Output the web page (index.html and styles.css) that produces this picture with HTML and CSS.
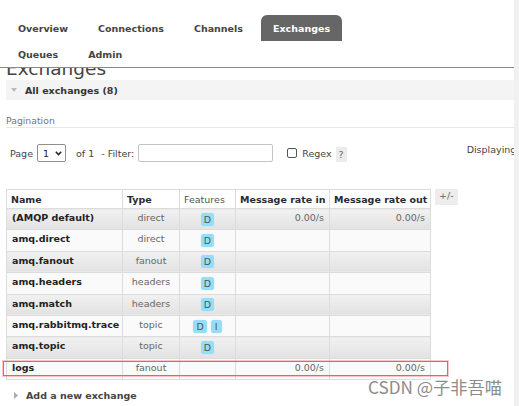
FILE: index.html
```html
<!DOCTYPE html>
<html>
<head>
<meta charset="utf-8">
<link rel="stylesheet" href="styles.css">
</head>
<body>
<div class="viewport">
  <div class="page">
    <nav class="tabs">
      <ul>
        <li><a>Overview</a></li>
        <li><a>Connections</a></li>
        <li><a>Channels</a></li>
        <li><a class="active">Exchanges</a></li>
        <li><a>Queues</a></li>
        <li><a>Admin</a></li>
      </ul>
    </nav>
    <div class="title-clip"><h1>Exchanges</h1></div>
    <div class="content">
      <div class="section-head">
        <svg class="tri-down" width="6" height="4" viewBox="0 0 6 4"><polygon points="0,0 6,0 3,4" fill="#bbb"/></svg>
        <span>All exchanges (8)</span>
      </div>
      <div class="pag-label">Pagination</div>
      <div class="filter-row">
        <span>Page</span>
        <div class="select"><span>1</span>
          <svg width="7" height="5" viewBox="0 0 7 5"><polyline points="0.8,0.8 3.5,3.6 6.2,0.8" fill="none" stroke="#222" stroke-width="1.5"/></svg>
        </div>
        <span class="of">of 1</span>
        <span class="filter">- Filter:</span>
        <div class="text-input"></div>
        <div class="checkbox"></div>
        <span class="regex">Regex</span>
        <span class="help">?</span>
        <span class="displaying">Displaying 8 items</span>
      </div>
      <div class="table-row">
        <div class="table-wrap">
          <table class="list">
            <colgroup>
              <col class="c-name"><col class="c-type"><col class="c-feat"><col class="c-in"><col class="c-out">
            </colgroup>
            <thead>
              <tr><th>Name</th><th>Type</th><th class="feat-h">Features</th><th>Message rate in</th><th>Message rate out</th></tr>
            </thead>
            <tbody>
              <tr class="alt1"><td class="name">(AMQP default)</td><td class="type">direct</td><td class="feat"><abbr>D</abbr></td><td class="rate">0.00/s</td><td class="rate">0.00/s</td></tr>
              <tr class="alt2"><td class="name">amq.direct</td><td class="type">direct</td><td class="feat"><abbr>D</abbr></td><td></td><td></td></tr>
              <tr class="alt1"><td class="name">amq.fanout</td><td class="type">fanout</td><td class="feat"><abbr>D</abbr></td><td></td><td></td></tr>
              <tr class="alt2"><td class="name">amq.headers</td><td class="type">headers</td><td class="feat"><abbr>D</abbr></td><td></td><td></td></tr>
              <tr class="alt1"><td class="name">amq.match</td><td class="type">headers</td><td class="feat"><abbr>D</abbr></td><td></td><td></td></tr>
              <tr class="alt2"><td class="name">amq.rabbitmq.trace</td><td class="type">topic</td><td class="feat"><abbr>D</abbr><abbr class="second">I</abbr></td><td></td><td></td></tr>
              <tr class="alt1"><td class="name">amq.topic</td><td class="type">topic</td><td class="feat"><abbr>D</abbr></td><td></td><td></td></tr>
              <tr class="alt2 last"><td class="name">logs</td><td class="type">fanout</td><td class="feat"></td><td class="rate">0.00/s</td><td class="rate">0.00/s</td></tr>
            </tbody>
          </table>
          <div class="highlight"></div>
        </div>
        <span class="plusminus">+/-</span>
      </div>
      <div class="add-head">
        <svg class="tri-right" width="4" height="7" viewBox="0 0 4 7"><polygon points="0,0 4,3.5 0,7" fill="#aaa"/></svg>
        <span>Add a new exchange</span>
      </div>
    </div>
    <div class="watermark">CSDN @子非吾喵</div>
  </div>
  <div class="scrollbar"></div>
</div>
</body>
</html>
```

FILE: styles.css
```css
html, body {
  margin: 0;
  padding: 0;
  background: #fff;
}

body {
  font-family: "DejaVu Sans", Verdana, sans-serif;
  font-size: 9.5px;
  color: #333;
}

.viewport {
  display: flex;
  width: 519px;
  height: 406px;
  overflow: hidden;
}

.page {
  position: relative;
  width: 514px;
  flex: none;
  overflow: hidden;
}

.scrollbar {
  flex: 1;
  background: #f1f1f1;
}

/* Tabs */
.tabs {
  border-bottom: 1px solid #8a8a8a;
}

.tabs ul {
  list-style: none;
  margin: 0;
  padding: 15px 0 0 0;
  width: 360px;
  display: flex;
  flex-wrap: wrap;
}

.tabs li {
  margin-left: 6px;
}

.tabs a {
  display: block;
  height: 26px;
  line-height: 27px;
  padding: 0 12px;
  font-weight: bold;
  color: #444;
}

.tabs a.active {
  background: #666;
  color: #fff;
  border-radius: 6px 6px 0 0;
}

/* Title */
.title-clip {
  height: 12px;
  overflow: hidden;
}

.title-clip h1 {
  margin: -10px 0 0 6px;
  font-size: 18.5px;
  line-height: 22px;
  font-weight: normal;
  color: #444;
}

.content {
  padding-left: 6px;
}

.section-head {
  height: 20px;
  background: #f4f4f4;
  display: flex;
  align-items: center;
  font-weight: bold;
  color: #333;
}

.tri-down {
  margin-left: 5px;
  margin-right: 8px;
}

.pag-label {
  margin-top: 15px;
  height: 12px;
  line-height: 12px;
  font-size: 9.3px;
  color: #777;
  border-bottom: 1px solid #e8e8e8;
}

/* Filter row */
.filter-row {
  margin-top: 16px;
  height: 18px;
  display: flex;
  align-items: center;
  padding-left: 4px;
  white-space: nowrap;
  color: #444;
}

.filter-row > * {
  flex: none;
}

.select {
  margin-left: 4px;
  box-sizing: border-box;
  width: 29px;
  height: 18px;
  border: 1px solid #8f8f8f;
  border-radius: 2px;
  display: flex;
  align-items: center;
  padding-left: 5px;
  color: #222;
}

.select svg {
  margin-left: 6px;
}

.of {
  margin-left: 10px;
}

.filter {
  margin-left: 7px;
}

.text-input {
  margin-left: 4px;
  box-sizing: border-box;
  width: 135px;
  height: 18px;
  border: 1px solid #c4c4c4;
  border-radius: 2px;
}

.checkbox {
  margin-left: 14px;
  box-sizing: border-box;
  width: 10px;
  height: 10px;
  border: 1px solid #555;
  border-radius: 2px;
}

.regex {
  margin-left: 5px;
}

.help {
  margin-left: 4px;
  background: #ececec;
  color: #666;
  padding: 0 3px;
  height: 15px;
  line-height: 15px;
  align-self: flex-end;
}

.displaying {
  margin-left: 120px;
  align-self: flex-start;
  line-height: 12px;
}

/* Table */
.table-row {
  margin-top: 27px;
  display: flex;
  align-items: flex-start;
}

.table-wrap {
  position: relative;
  flex: none;
}

table.list {
  border-collapse: collapse;
  border: 1px solid #dcdcdc;
  table-layout: fixed;
  width: 425px;
}

.c-name { width: 116px; }
.c-type { width: 57px; }
.c-feat { width: 56px; }
.c-in { width: 94px; }
.c-out { width: 101px; }

table.list th {
  height: 18px;
  padding: 0 4px;
  text-align: left;
  font-weight: bold;
  color: #2a2a35;
  border: 1px solid #dcdcdc;
  background: #fff;
  white-space: nowrap;
  overflow: hidden;
}

table.list th.feat-h {
  font-weight: normal;
  color: #555;
}

table.list td {
  height: 21.4px;
  padding: 3px 5px 0 5px;
  vertical-align: top;
  line-height: 12px;
  border: 1px solid #dcdcdc;
  box-sizing: border-box;
  white-space: nowrap;
  overflow: hidden;
}

tr.alt1 td {
  background: linear-gradient(#f1f1f1, #e2e2e2);
}

tr.alt2 td {
  background: #fafafa;
}

td.name {
  font-weight: bold;
  color: #222;
}

td.type {
  text-align: center;
  color: #666;
}

table.list td.feat {
  text-align: center;
  vertical-align: middle;
  padding-top: 0;
}

td.rate {
  text-align: right;
  color: #666;
}

abbr {
  display: inline-block;
  background: #96def7;
  color: #555;
  border-radius: 3px;
  padding: 0 3px;
  height: 13px;
  line-height: 13px;
  text-decoration: none;
  box-shadow: 0 0 1px #96def7;
}

abbr.second {
  margin-left: 4px;
  padding: 0 4px;
}

.highlight {
  position: absolute;
  left: -3px;
  top: 172px;
  width: 443px;
  height: 13px;
  border: 1px solid #ff5a5a;
  box-shadow: 0 0 0 1px rgba(255, 130, 130, 0.45);
}

.plusminus {
  margin-left: 4px;
  background: #ededed;
  color: #666;
  padding: 0 4px;
  height: 16px;
  line-height: 14px;
  flex: none;
}

.add-head {
  margin-top: 9px;
  height: 12px;
  display: flex;
  align-items: center;
  font-weight: bold;
  color: #444;
}

.tri-right {
  margin-left: 8px;
  margin-right: 8px;
}

.watermark {
  position: absolute;
  left: 368px;
  top: 377px;
  font-family: "Noto Sans CJK SC", sans-serif;
  font-size: 17.2px;
  line-height: 20px;
  color: #8c8c8c;
  white-space: nowrap;
}
```
